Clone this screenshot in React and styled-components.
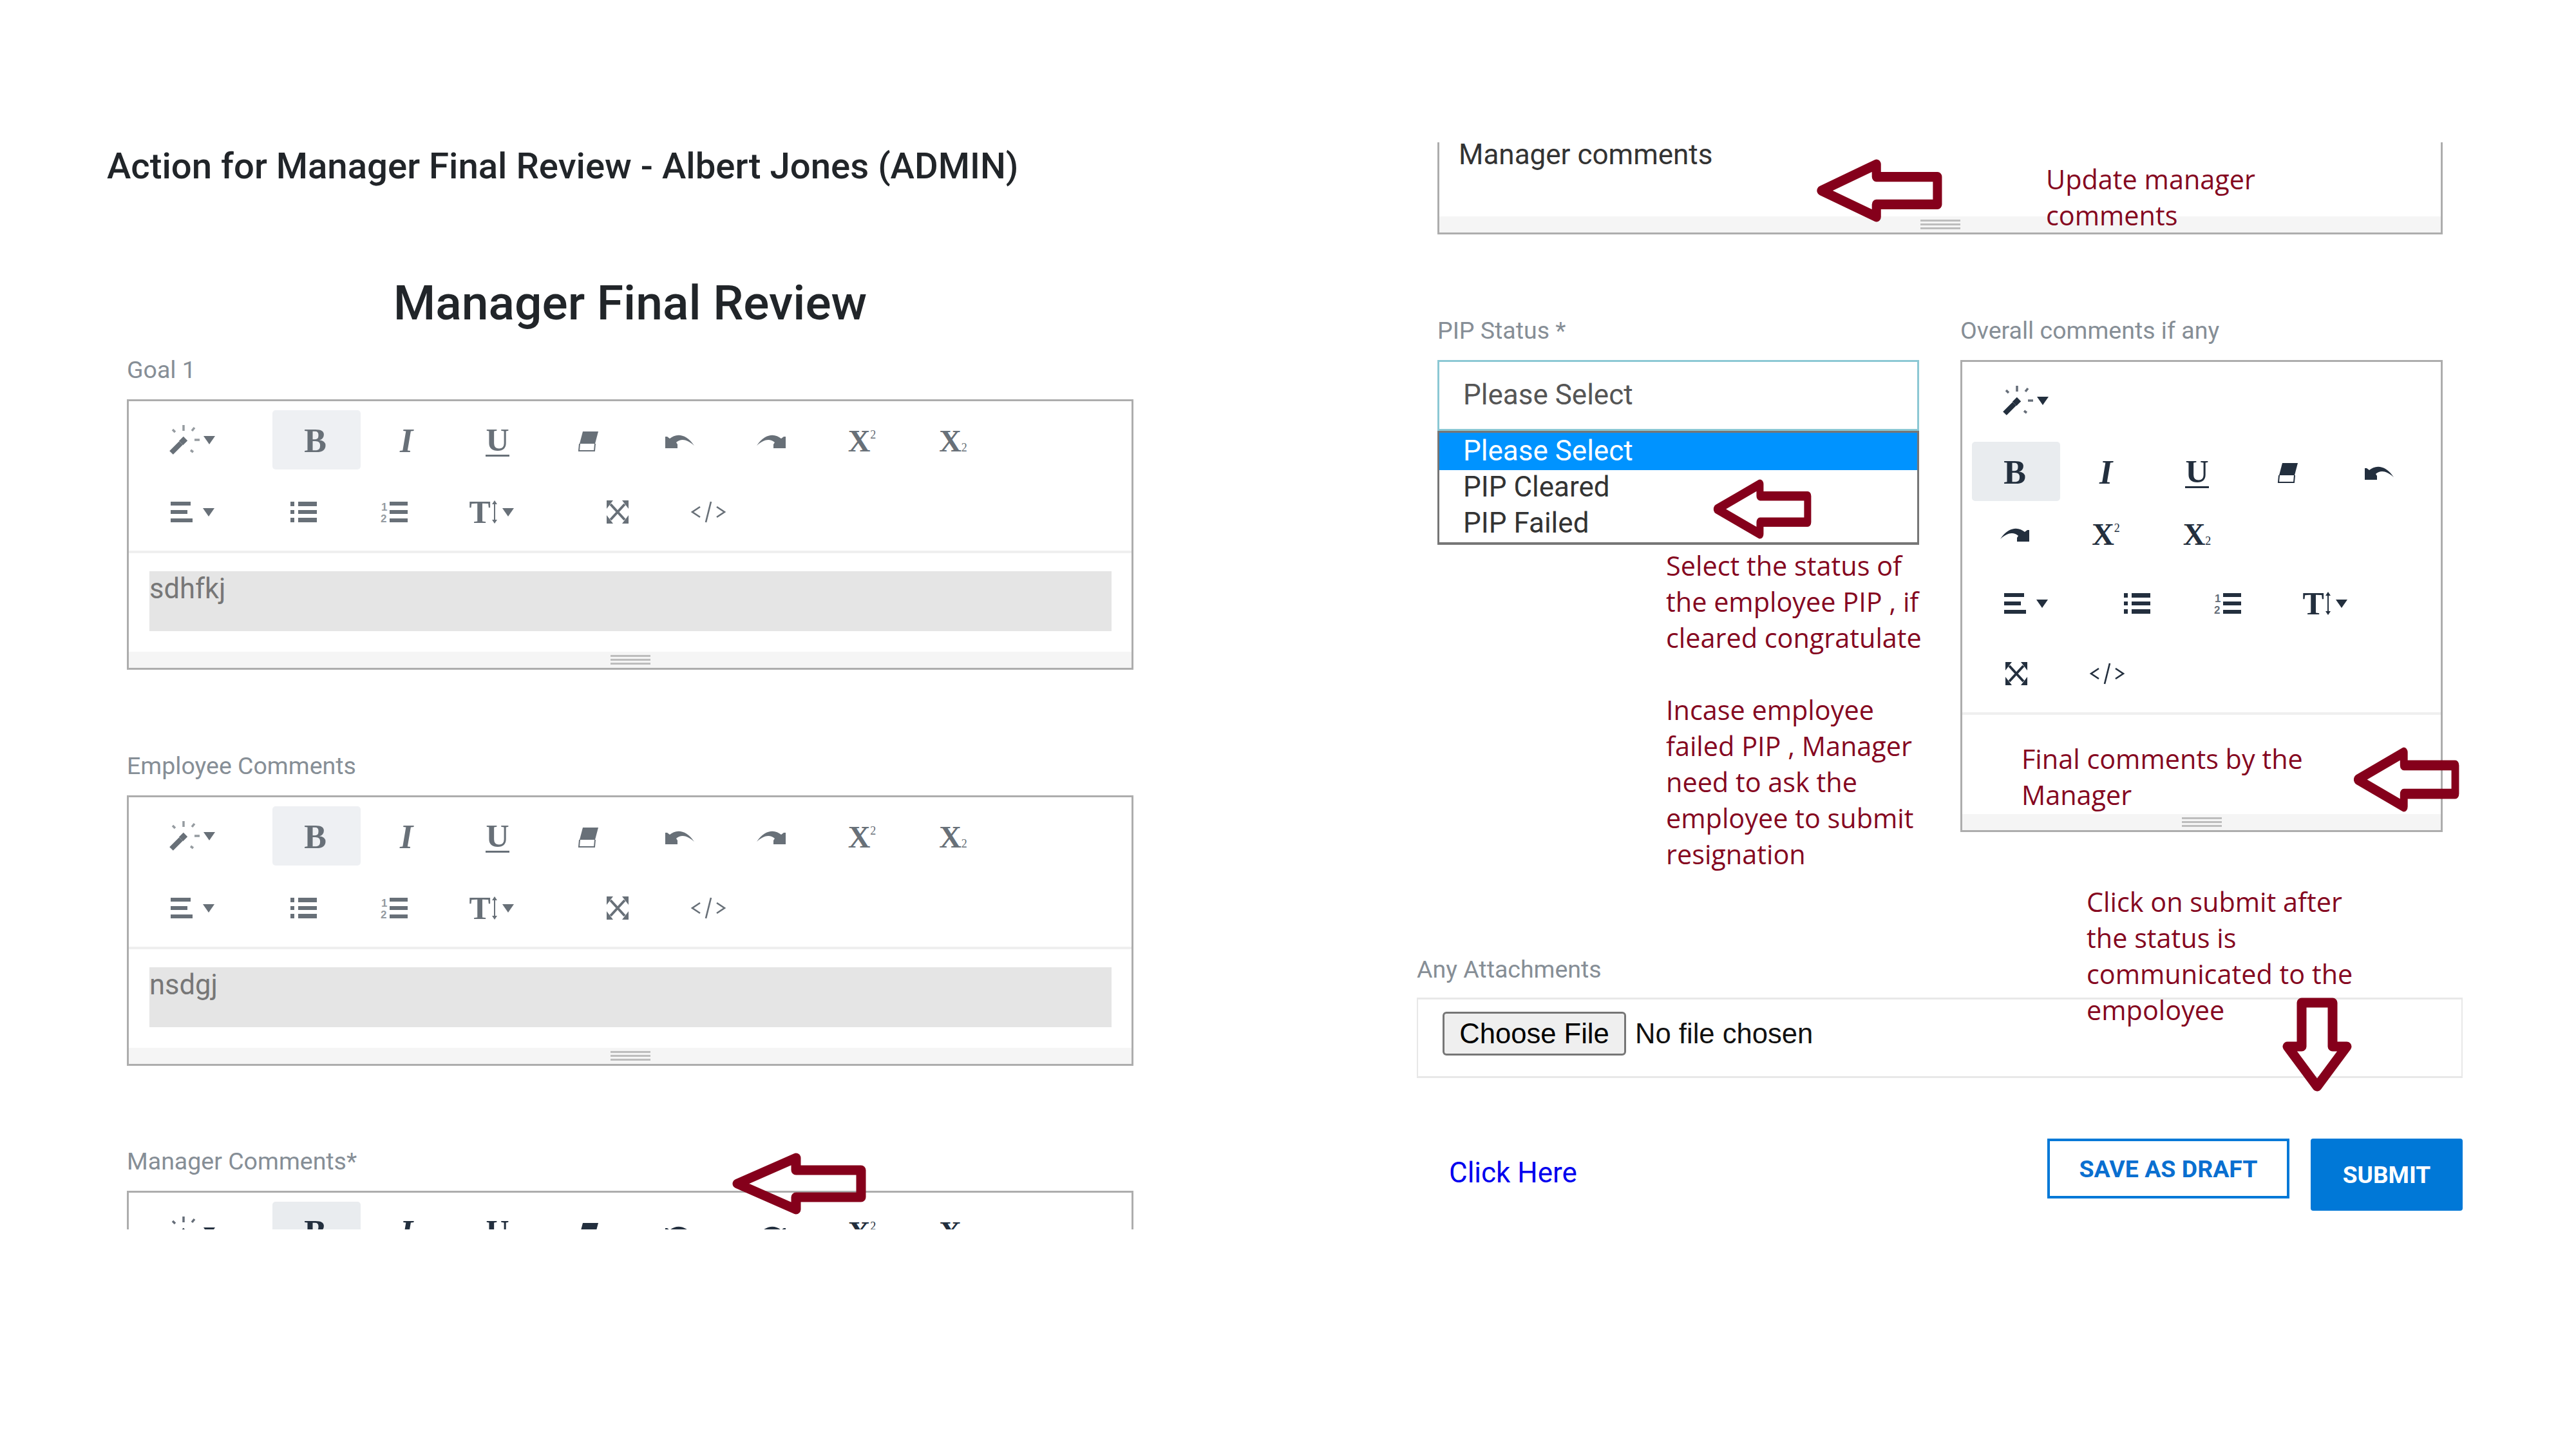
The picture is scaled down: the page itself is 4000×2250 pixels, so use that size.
import React from 'react';
import styled, { createGlobalStyle } from 'styled-components';

const Global = createGlobalStyle`
  html, body { margin: 0; padding: 0; background: #fff; }
  body { font-family: Roboto, "Liberation Sans", sans-serif; }
`;

const Page = styled.div`
  width: 4000px;
  height: 2250px;
  overflow: hidden;
  display: flex;
  gap: 440px;
  padding-left: 166px;
  box-sizing: border-box;
`;

const LeftCol = styled.div`
  position: relative;
  width: 1594px;
  height: 1909px;
  overflow: hidden;
  padding-top: 225px;
  box-sizing: border-box;
`;

const Title = styled.h4`
  margin: 0;
  font-size: 56.3px;
  line-height: 66px;
  font-weight: 500;
  color: #212529;
  white-space: nowrap;
`;

const Heading = styled.h2`
  margin: 134px 0 36px 31px;
  width: 1563px;
  text-align: center;
  font-size: 75px;
  line-height: 90px;
  font-weight: 500;
  color: #212529;
`;

const FormBlock = styled.div`
  margin-left: 31px;
  width: 1563px;
`;

const Label = styled.div`
  font-size: 37.5px;
  line-height: 46px;
  color: #868e96;
  margin-top: ${(p) => p.$mt || 0}px;
  margin-bottom: ${(p) => (p.$mb === undefined ? 23 : p.$mb)}px;
  white-space: nowrap;
`;

const EditorBox = styled.div`
  --tool-on: ${(p) => (p.$dark ? '#e9ecef' : '#eef0f3')};
  border: 3px solid #adadad;
  background: #fff;
  color: ${(p) => (p.$dark ? '#232f3e' : '#687078')};
`;

const Toolbar = styled.div`
  padding: 14px 15px 14px;
`;

const ToolRow = styled.div`
  display: flex;
  gap: 4.5px;
  margin-top: ${(p) => p.$mt}px;
`;

const Tool = styled.div`
  width: ${(p) => p.$w || 137}px;
  height: 92px;
  flex: none;
  box-sizing: border-box;
  display: flex;
  align-items: center;
  justify-content: ${(p) => (p.$pl ? 'flex-start' : 'center')};
  padding: ${(p) => (p.$nudge ? '3px 4px 0 0' : `0 0 0 ${p.$pl || 0}px`)};
  border-radius: 5px;
  background: ${(p) => (p.$on ? 'var(--tool-on)' : 'transparent')};
`;

const Caret = styled.span`
  width: 0;
  height: 0;
  flex: none;
  margin-left: ${(p) => p.$ml}px;
  border-left: 9px solid transparent;
  border-right: 9px solid transparent;
  border-top: 13px solid currentColor;
`;

const SerifGlyph = styled.span`
  font-family: "Liberation Serif", serif;
  font-size: ${(p) => p.$size || 52}px;
  line-height: 44px;
  font-weight: 700;
  font-style: ${(p) => (p.$italic ? 'italic' : 'normal')};
`;

const UnderGlyph = styled(SerifGlyph)`
  display: inline-block;
  border-bottom: 3px solid currentColor;
  padding-bottom: 1px;
`;

const ScriptMark = styled.span`
  font-family: "Liberation Serif", serif;
  font-size: 18px;
  font-weight: 400;
  align-self: ${(p) => (p.$sub ? 'flex-end' : 'flex-start')};
  margin: ${(p) => (p.$sub ? '0 0 23px 0' : '25px 0 0 0')};
`;

const EditArea = styled.div`
  border-top: 4px solid #efefef;
  padding: ${(p) => p.$pad};
  font-size: 43.5px;
`;

const Filled = styled.div`
  height: 93px;
  background: #e5e5e5;
  color: #777;
  line-height: 56px;
`;

const StatusBar = styled.div`
  height: 25px;
  background: #f5f5f5;
  display: flex;
  align-items: center;
  justify-content: center;
`;

const Grip = styled.div`
  width: 62px;
  height: 15px;
  border-top: 3px solid #bdbdbd;
  border-bottom: 3px solid #bdbdbd;
  box-sizing: border-box;
  display: flex;
  align-items: center;
  &::before {
    content: "";
    width: 100%;
    height: 3px;
    background: #bdbdbd;
  }
`;

const RightCol = styled.div`
  position: relative;
  width: 1624px;
  padding-top: 221px;
  box-sizing: border-box;
`;

const CutEditor = styled.div`
  position: relative;
  margin-left: 32px;
  width: 1561px;
  height: 143px;
  box-sizing: border-box;
  border: 3px solid #adadad;
  border-top: 0;
  display: flex;
  flex-direction: column;
  justify-content: space-between;
`;

const PlainText = styled.div`
  padding-left: 30px;
  font-size: 44px;
  line-height: 38px;
  color: #333;
`;

const Note = styled.div`
  font-family: "Open Sans", sans-serif;
  font-size: 41.4px;
  line-height: 56px;
  color: #85071f;
  white-space: nowrap;
`;

const FloatNote = styled(Note)`
  position: absolute;
  left: ${(p) => p.$x}px;
  top: ${(p) => p.$y}px;
`;

const PipRow = styled.div`
  display: grid;
  grid-template-columns: 748px 749px;
  column-gap: 64px;
  align-items: start;
  margin: 126px 0 0 32px;
`;

const SelectBox = styled.div`
  height: 110px;
  box-sizing: border-box;
  border: 3px solid #8cc8d4;
  padding: 0 0 3px 37px;
  display: flex;
  align-items: center;
  font-size: 44px;
  color: #555;
`;

const OptionList = styled.div`
  border: 3px solid #767676;
  border-bottom-width: 4px;
`;

const Option = styled.div`
  height: ${(p) => (p.$on ? 58 : 56)}px;
  line-height: ${(p) => (p.$on ? 56 : 52)}px;
  padding-left: 37px;
  font-size: 44px;
  color: ${(p) => (p.$on ? '#fff' : '#333')};
  background: ${(p) => (p.$on ? '#0093ff' : '#fff')};
`;

const UnderNote = styled(Note)`
  margin: 4px 0 0 355px;
`;

const AttachBox = styled.div`
  height: 125px;
  box-sizing: border-box;
  border: 3px solid #e8e8e8;
  border-width: 3px 2px;
  padding: 19px 0 0 38px;
  display: flex;
  align-items: flex-start;
  gap: 14px;
  font-family: "Liberation Sans", Arial, sans-serif;
  font-size: 43.6px;
  color: #111;
`;

const ChooseButton = styled.button`
  width: 285px;
  height: 68px;
  padding: 0;
  font: inherit;
  color: #000;
  background: #efefef;
  border: 3px solid #767676;
  border-radius: 6px;
`;

const FileName = styled.span`
  line-height: 68px;
`;

const Actions = styled.div`
  margin-top: 94px;
  display: flex;
  align-items: flex-start;
  gap: 33px;
`;

const ClickLink = styled.a`
  margin: 26px auto 0 50px;
  font-size: 44px;
  line-height: 54px;
  color: #0000ee;
`;

const DraftButton = styled.button`
  width: 376px;
  height: 93px;
  padding: 0;
  background: #fff;
  border: 4px solid #0078d7;
  color: #0a6fd0;
  font: 700 37.5px Roboto, sans-serif;
`;

const SubmitButton = styled.button`
  width: 236px;
  height: 112px;
  padding: 0;
  background: #0078d7;
  border: 0;
  border-radius: 4px;
  color: #fff;
  font: 700 37px Roboto, sans-serif;
`;

const ArrowSvg = styled.svg`
  position: absolute;
  left: ${(p) => p.$x}px;
  top: ${(p) => p.$y}px;
  width: ${(p) => p.$w}px;
  height: ${(p) => p.$h}px;
  overflow: visible;
`;

const IconSvg = styled.svg`
  overflow: visible;
  flex: none;
`;

const LeftArrow = ({ x, y, w, h }) => (
  <ArrowSvg $x={x} $y={y} $w={w} $h={h} viewBox="0 0 209 96" preserveAspectRatio="none">
    <path d="M10 48 L101 8 V27 H202 V69 H101 V88 Z" fill="none" stroke="#85001b" strokeWidth="15" strokeLinejoin="round" />
  </ArrowSvg>
);

const DownArrow = ({ x, y }) => (
  <ArrowSvg $x={x} $y={y} $w={110} $h={147} viewBox="0 0 110 147">
    <path d="M31 8 H79 V76 H101 L55 138 L9 76 H31 Z" fill="none" stroke="#85001b" strokeWidth="15" strokeLinejoin="round" />
  </ArrowSvg>
);

const WandIcon = () => (
  <IconSvg width="50" height="48" viewBox="0 0 50 48">
    <path d="M4 44 L19 29" stroke="currentColor" strokeWidth="8" />
    <path d="M19 29 L26 22" stroke="currentColor" strokeWidth="9" />
    <path d="M23 1 V10 M6 8 L10 12 M40 5 L36 10 M40 24 H48 M34 40 L38 43" stroke="currentColor" strokeWidth="3.5" fill="none" opacity="0.7" />
  </IconSvg>
);

const AlignIcon = () => (
  <IconSvg width="34" height="33" viewBox="0 0 34 33">
    <path d="M0 0 H31 V6 H0 Z M0 13 H26 V19 H0 Z M0 26 H34 V32 H0 Z" fill="currentColor" />
  </IconSvg>
);

const ListIcon = () => (
  <IconSvg width="41" height="32" viewBox="0 0 41 32" style={{ marginLeft: 3 }}>
    <path d="M0 0 H6 V7 H0 Z M0 13 H6 V19 H0 Z M0 25 H6 V32 H0 Z M12 0 H41 V7 H12 Z M12 13 H41 V19 H12 Z M12 25 H41 V32 H12 Z" fill="currentColor" />
  </IconSvg>
);

const NumberIcon = () => (
  <IconSvg width="42" height="34" viewBox="0 0 42 34">
    <text x="1" y="15" fontFamily="Liberation Sans" fontSize="17" fontWeight="700" fill="currentColor" opacity="0.7">1</text>
    <text x="0" y="33" fontFamily="Liberation Sans" fontSize="17" fontWeight="700" fill="currentColor" opacity="0.7">2</text>
    <path d="M14 1 H42 V7 H14 Z M14 14 H42 V20 H14 Z M14 27 H42 V33 H14 Z" fill="currentColor" />
  </IconSvg>
);

const HeightArrow = () => (
  <IconSvg width="12" height="36" viewBox="0 0 12 36">
    <path d="M6 3 V33" stroke="currentColor" strokeWidth="2" />
    <path d="M2 6 L6 0 L10 6 Z M2 30 L6 36 L10 30 Z" fill="currentColor" />
  </IconSvg>
);

const EraserIcon = () => (
  <IconSvg width="30" height="32" viewBox="0 0 30 32">
    <path d="M6 1 H30 L25 20 H1 Z" fill="currentColor" />
    <path d="M1 20 L0 31 H24 L25 20" fill="#fff" stroke="currentColor" strokeWidth="2" />
  </IconSvg>
);

const UndoIcon = ({ flip }) => (
  <IconSvg width="45" height="22" viewBox="0 0 45 22" style={flip ? { transform: 'scaleX(-1)' } : undefined}>
    <path d="M0 22 V4 H3 L7 7 C16 -1 32 -2 45 18 C33 7 24 7 17 13 L19 16 V22 Z" fill="currentColor" />
  </IconSvg>
);

const ExpandIcon = () => (
  <IconSvg width="34" height="36" viewBox="0 0 34 36">
    <path d="M6 6 L28 30 M28 6 L6 30" stroke="currentColor" strokeWidth="4" />
    <path d="M0 0 H10 L0 13 Z M34 0 H24 L34 13 Z M0 36 H10 L0 23 Z M34 36 H24 L34 23 Z" fill="currentColor" />
  </IconSvg>
);

const CodeIcon = () => (
  <IconSvg width="54" height="34" viewBox="0 0 54 34">
    <path d="M14 9 L2 17 L14 25 M40 9 L52 17 L40 25 M31 1 L23 33" stroke="currentColor" strokeWidth="2.6" fill="none" />
  </IconSvg>
);

const TOOLS = {
  style: { w: 203.5, pl: 47, icon: <><WandIcon /><Caret $ml={4} /></> },
  bold: { on: true, nudge: true, icon: <SerifGlyph>B</SerifGlyph> },
  italic: { nudge: true, icon: <SerifGlyph $italic>I</SerifGlyph> },
  under: { nudge: true, icon: <UnderGlyph $size={50}>U</UnderGlyph> },
  eraser: { nudge: true, icon: <EraserIcon /> },
  undo: { nudge: true, icon: <UndoIcon /> },
  redo: { nudge: true, icon: <UndoIcon flip /> },
  sup: { nudge: true, icon: <><SerifGlyph $size={48}>X</SerifGlyph><ScriptMark>2</ScriptMark></> },
  sub: { nudge: true, icon: <><SerifGlyph $size={48}>X</SerifGlyph><ScriptMark $sub>2</ScriptMark></> },
  align: { w: 182, pl: 50, icon: <><AlignIcon /><Caret $ml={16} /></> },
  ul: { icon: <ListIcon /> },
  ol: { icon: <NumberIcon /> },
  height: { w: 201, pl: 44, icon: <><SerifGlyph $size={50}>T</SerifGlyph><HeightArrow /><Caret $ml={6} /></> },
  expand: { icon: <ExpandIcon /> },
  code: { icon: <CodeIcon /> },
};

const WIDE_ROWS = [
  { mt: 0, tools: ['style', 'bold', 'italic', 'under', 'eraser', 'undo', 'redo', 'sup', 'sub'] },
  { mt: 20, tools: ['align', 'ul', 'ol', 'height', 'expand', 'code'] },
];

const NARROW_ROWS = [
  { mt: 0, tools: ['style'] },
  { mt: 18, tools: ['bold', 'italic', 'under', 'eraser', 'undo'] },
  { mt: 4, tools: ['redo', 'sup', 'sub'] },
  { mt: 17, tools: ['align', 'ul', 'ol', 'height'] },
  { mt: 17, tools: ['expand', 'code'] },
];

const EditorToolbar = ({ rows }) => (
  <Toolbar>
    {rows.map((row, i) => (
      <ToolRow key={i} $mt={row.mt}>
        {row.tools.map((name) => {
          const t = TOOLS[name];
          return <Tool key={name} $w={t.w} $pl={t.pl} $on={t.on} $nudge={t.nudge}>{t.icon}</Tool>;
        })}
      </ToolRow>
    ))}
  </Toolbar>
);

const GoalEditor = ({ text, dark }) => (
  <EditorBox $dark={dark}>
    <EditorToolbar rows={WIDE_ROWS} />
    <EditArea $pad="28px 31px 32px 32px">
      <Filled>{text}</Filled>
    </EditArea>
    <StatusBar><Grip /></StatusBar>
  </EditorBox>
);

export default function App() {
  return (
    <Page>
      <Global />
      <LeftCol>
        <Title>Action for Manager Final Review - Albert Jones (ADMIN)</Title>
        <Heading>Manager Final Review</Heading>
        <FormBlock>
          <Label>Goal 1</Label>
          <GoalEditor text="sdhfkj" />
          <Label $mt={126}>Employee Comments</Label>
          <GoalEditor text="nsdgj" />
          <Label $mt={125}>Manager Comments*</Label>
          <GoalEditor text="" dark />
        </FormBlock>
        <LeftArrow x={969} y={1790} w={209} h={96} />
      </LeftCol>

      <RightCol>
        <CutEditor>
          <PlainText>Manager comments</PlainText>
          <StatusBar><Grip /></StatusBar>
          <FloatNote $x={942} $y={29}>Update manager<br />comments</FloatNote>
        </CutEditor>

        <PipRow>
          <div>
            <Label>PIP Status *</Label>
            <SelectBox>Please Select</SelectBox>
            <OptionList>
              <Option $on>Please Select</Option>
              <Option>PIP Cleared</Option>
              <Option>PIP Failed</Option>
            </OptionList>
            <UnderNote>
              Select the status of<br />
              the employee PIP , if<br />
              cleared congratulate<br />
              <br />
              Incase employee<br />
              failed PIP , Manager<br />
              need to ask the<br />
              employee to submit<br />
              resignation
            </UnderNote>
          </div>
          <div>
            <Label>Overall comments if any</Label>
            <EditorBox $dark>
              <EditorToolbar rows={NARROW_ROWS} />
              <EditArea $pad="40px 0 2px 92px">
                <Note>Final comments by the<br />Manager</Note>
              </EditArea>
              <StatusBar><Grip /></StatusBar>
            </EditorBox>
          </div>
        </PipRow>

        <Label $mt={128} $mb={21}>Any Attachments</Label>
        <AttachBox>
          <ChooseButton>Choose File</ChooseButton>
          <FileName>No file chosen</FileName>
        </AttachBox>

        <Actions>
          <ClickLink>Click Here</ClickLink>
          <DraftButton>SAVE AS DRAFT</DraftButton>
          <SubmitButton>SUBMIT</SubmitButton>
        </Actions>

        <FloatNote $x={1040} $y={1372}>
          Click on submit after<br />
          the status is<br />
          communicated to the<br />
          empoloyee
        </FloatNote>
        <LeftArrow x={619} y={247} w={196} h={98} />
        <LeftArrow x={459} y={744} w={153} h={93} />
        <LeftArrow x={1453} y={1160} w={165} h={101} />
        <DownArrow x={1343} y={1549} />
      </RightCol>
    </Page>
  );
}
